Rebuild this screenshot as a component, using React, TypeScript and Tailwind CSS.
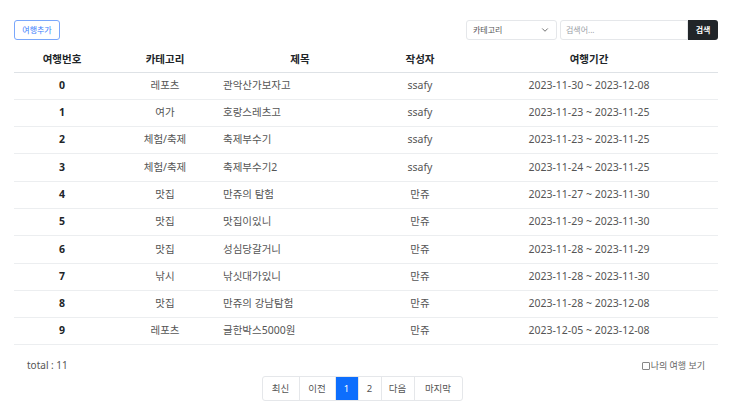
import { ChevronDown } from "lucide-react";

const trips = [
  { id: 0, category: "레포츠", title: "관악산가보자고", author: "ssafy", period: "2023-11-30 ~ 2023-12-08" },
  { id: 1, category: "여가", title: "호랑스레츠고", author: "ssafy", period: "2023-11-23 ~ 2023-11-25" },
  { id: 2, category: "체험/축제", title: "축제부수기", author: "ssafy", period: "2023-11-23 ~ 2023-11-25" },
  { id: 3, category: "체험/축제", title: "축제부수기2", author: "ssafy", period: "2023-11-24 ~ 2023-11-25" },
  { id: 4, category: "맛집", title: "만쥬의 탐험", author: "만쥬", period: "2023-11-27 ~ 2023-11-30" },
  { id: 5, category: "맛집", title: "맛집이있니", author: "만쥬", period: "2023-11-29 ~ 2023-11-30" },
  { id: 6, category: "맛집", title: "성심당갈거니", author: "만쥬", period: "2023-11-28 ~ 2023-11-29" },
  { id: 7, category: "낚시", title: "낚싯대가있니", author: "만쥬", period: "2023-11-28 ~ 2023-11-30" },
  { id: 8, category: "맛집", title: "만쥬의 강남탐험", author: "만쥬", period: "2023-11-28 ~ 2023-12-08" },
  { id: 9, category: "레포츠", title: "글한박스5000원", author: "만쥬", period: "2023-12-05 ~ 2023-12-08" },
];

const pages = [
  { label: "최신", w: "w-[36px]" },
  { label: "이전", w: "w-[36px]" },
  { label: "1", w: "w-[23px]", active: true },
  { label: "2", w: "w-[23px]" },
  { label: "다음", w: "w-[33px]" },
  { label: "마지막", w: "w-[48px]" },
];

export default function App() {
  return (
    <div className="w-[744px] h-[409px] bg-white font-['Noto_Sans','Noto_Sans_CJK_KR',sans-serif] text-[10.5px] text-[#212529]">
      <div className="mx-[14px] w-[704px] pt-[20px]">
        <div className="flex items-center justify-between h-[20px]">
          <button className="h-[20px] w-[46px] rounded-[3px] border border-[#7aa7fb] text-[8px] text-[#3d7efc]">
            여행추가
          </button>
          <div className="flex h-[20px] items-stretch">
            <div className="flex w-[91px] items-center justify-between rounded-[3px] border border-[#e5e7ea] pl-[6px] pr-[6px] text-[8px] text-[#555]">
              <span>카테고리</span>
              <ChevronDown size={10} strokeWidth={2} className="text-[#555]" />
            </div>
            <div className="ml-[3px] flex w-[128px] items-center rounded-l-[3px] border border-[#e5e7ea] pl-[5px] text-[8px] text-[#9aa0a6]">
              검색어...
            </div>
            <button className="w-[30px] rounded-r-[3px] bg-[#212529] text-[8px] font-bold text-white">
              검색
            </button>
          </div>
        </div>

        <table className="mt-[8px] w-[704px] table-fixed border-collapse">
          <colgroup>
            <col className="w-[96px]" />
            <col className="w-[110px]" />
            <col className="w-[160px]" />
            <col className="w-[80px]" />
            <col className="w-[258px]" />
          </colgroup>
          <thead>
            <tr className="h-[24px] border-b border-[#dee2e6]">
              <th className="text-center font-bold">여행번호</th>
              <th className="text-center font-bold">카테고리</th>
              <th className="text-center font-bold">제목</th>
              <th className="text-center font-bold">작성자</th>
              <th className="text-center font-bold">여행기간</th>
            </tr>
          </thead>
          <tbody>
            {trips.map((t) => (
              <tr key={t.id} className="h-[27.3px] border-b border-[#eceef0]">
                <td className="text-center font-bold">{t.id}</td>
                <td className="text-center text-[#555]">{t.category}</td>
                <td className="pl-[3px] text-left text-[#555]">{t.title}</td>
                <td className="text-center text-[#555]">{t.author}</td>
                <td className="text-center text-[#555]">{t.period}</td>
              </tr>
            ))}
          </tbody>
        </table>

        <div className="mt-[13px] flex items-center justify-between px-[13px] text-[#555]">
          <span className="text-[10px]">total : 11</span>
          <label className="flex items-center gap-[1px] text-[9px] text-[#666]">
            <span className="inline-block h-[8px] w-[8px] rounded-[1px] border border-[#888]" />
            나의 여행 보기
          </label>
        </div>

        <div className="mt-[3px] flex justify-center">
          <div className="ml-[-8px] flex h-[25px] overflow-hidden rounded-[3px] border border-[#e5e7ea] text-[9.5px]">
            {pages.map((p, i) => (
              <div
                key={p.label}
                className={
                  "flex items-center justify-center " +
                  p.w +
                  (i > 0 ? " border-l border-[#e5e7ea]" : "") +
                  (p.active ? " bg-[#0d6efd] text-white" : " text-[#555]")
                }
              >
                {p.label}
              </div>
            ))}
          </div>
        </div>
      </div>
    </div>
  );
}
